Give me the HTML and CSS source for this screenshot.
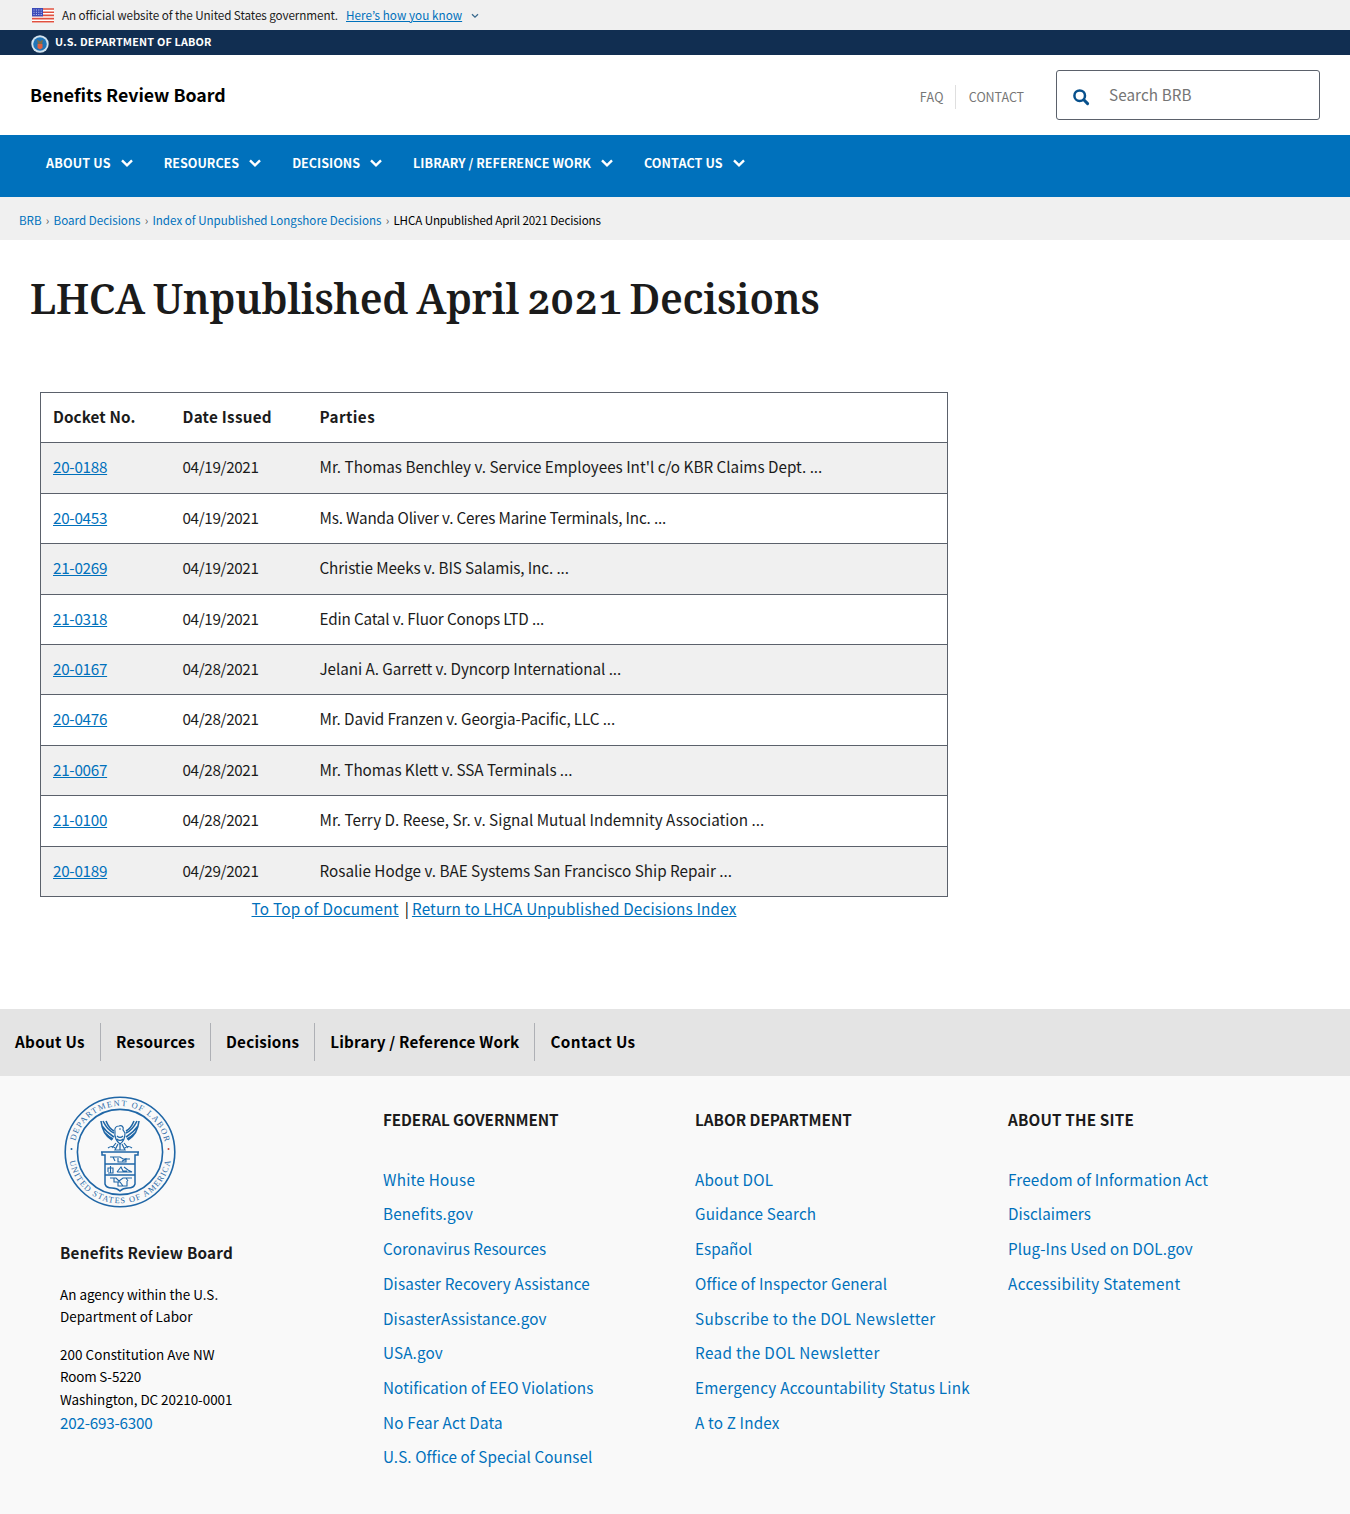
FILE: index.html
```html
<!DOCTYPE html>
<html lang="en">
<head>
<meta charset="utf-8">
<title>LHCA Unpublished April 2021 Decisions</title>
<link rel="stylesheet" href="styles.css">
</head>
<body>
<section class="gov-banner">
  <svg class="flag" viewBox="0 0 22 15"><rect width="22" height="15" fill="#fff"/><path d="M0 1h22M0 4.2h22M0 7.4h22M0 10.6h22M0 13.8h22" stroke="#e0503f" stroke-width="1.6"/><rect width="11" height="8.4" fill="#3c4bb8"/><path d="M1.5 2h9M1.5 4.3h9M1.5 6.5h9" stroke="#c5cbf2" stroke-dasharray="1 1.4"/></svg>
  <span class="gov-text">An official website of the United States government.</span>
  <a class="gov-link" href="#">Here’s how you know</a>
  <svg class="gov-chevron" viewBox="0 0 8 6"><path d="M1 1.2l3 3 3-3" fill="none" stroke="#3a6a8e" stroke-width="1.3"/></svg>
</section>
<div class="dept-bar">
  <svg class="dept-seal" viewBox="0 0 18 18"><circle cx="9" cy="9" r="8.7" fill="#d3e3ee"/><circle cx="9" cy="9" r="6.8" fill="#1f74b8"/><path d="M6 4.5l3 2 3-2-1 5H7z" fill="#7b6d4c"/><path d="M6.5 9h5v4L9 14.4 6.5 13z" fill="#e0603f"/></svg>
  <span>U.S. DEPARTMENT OF LABOR</span>
</div>
<header class="site-header">
  <a class="site-name" href="#">Benefits Review Board</a>
  <nav class="util-nav"><a href="#">FAQ</a><a href="#">CONTACT</a></nav>
  <form class="search"><svg viewBox="0 0 18 18"><circle cx="7.7" cy="7.7" r="5.3" fill="none" stroke="#07508c" stroke-width="2.5"/><path d="M11.8 11.8l3.8 3.8" stroke="#07508c" stroke-width="3" stroke-linecap="round"/></svg><span>Search BRB</span></form>
</header>
<nav class="main-nav">
  <a class="track-15" href="#"><span>ABOUT US</span><svg viewBox="0 0 12 8"><path d="M1 1.3l5 5 5-5"/></svg></a>
  <a href="#"><span>RESOURCES</span><svg viewBox="0 0 12 8"><path d="M1 1.3l5 5 5-5"/></svg></a>
  <a href="#"><span>DECISIONS</span><svg viewBox="0 0 12 8"><path d="M1 1.3l5 5 5-5"/></svg></a>
  <a class="track-5" href="#"><span>LIBRARY / REFERENCE WORK</span><svg viewBox="0 0 12 8"><path d="M1 1.3l5 5 5-5"/></svg></a>
  <a class="track-10" href="#"><span>CONTACT US</span><svg viewBox="0 0 12 8"><path d="M1 1.3l5 5 5-5"/></svg></a>
</nav>
<nav class="breadcrumb">
  <a href="#">BRB</a><i>›</i><a href="#">Board Decisions</a><i>›</i><a href="#">Index of Unpublished Longshore Decisions</a><i>›</i><span class="tight-10">LHCA Unpublished April 2021 Decisions</span>
</nav>
<main class="content">
  <h1>LHCA Unpublished April 2021 Decisions</h1>
  <table class="decisions">
    <thead><tr><th class="c-docket track-10">Docket No.</th><th class="c-date track-25">Date Issued</th><th class="track-40">Parties</th></tr></thead>
    <tbody>
      <tr><td><a href="#">20-0188</a></td><td>04/19/2021</td><td>Mr. Thomas Benchley v. Service Employees Int'l c/o KBR Claims Dept. ...</td></tr>
      <tr><td><a href="#">20-0453</a></td><td>04/19/2021</td><td class="tight-15">Ms. Wanda Oliver v. Ceres Marine Terminals, Inc. ...</td></tr>
      <tr><td><a href="#">21-0269</a></td><td>04/19/2021</td><td class="tight-10">Christie Meeks v. BIS Salamis, Inc. ...</td></tr>
      <tr><td><a href="#">21-0318</a></td><td>04/19/2021</td><td class="tight-15">Edin Catal v. Fluor Conops LTD ...</td></tr>
      <tr><td><a href="#">20-0167</a></td><td>04/28/2021</td><td class="tight-5">Jelani A. Garrett v. Dyncorp International ...</td></tr>
      <tr><td><a href="#">20-0476</a></td><td>04/28/2021</td><td class="tight-10">Mr. David Franzen v. Georgia-Pacific, LLC ...</td></tr>
      <tr><td><a href="#">21-0067</a></td><td>04/28/2021</td><td class="tight-5">Mr. Thomas Klett v. SSA Terminals ...</td></tr>
      <tr><td><a href="#">21-0100</a></td><td>04/28/2021</td><td>Mr. Terry D. Reese, Sr. v. Signal Mutual Indemnity Association ...</td></tr>
      <tr><td><a href="#">20-0189</a></td><td>04/29/2021</td><td>Rosalie Hodge v. BAE Systems San Francisco Ship Repair ...</td></tr>
    </tbody>
  </table>
  <p class="doc-links"><a class="track-25" href="#">To Top of Document</a><b>|</b><a class="track-20" href="#">Return to LHCA Unpublished Decisions Index</a></p>
</main>
<nav class="footer-nav"><a class="track-30" href="#">About Us</a><a class="track-30" href="#">Resources</a><a class="track-20" href="#">Decisions</a><a class="track-20" href="#">Library / Reference Work</a><a class="track-40" href="#">Contact Us</a></nav>
<footer class="site-footer">
  <div class="agency">
    <svg class="seal" viewBox="-56 -56 112 112">
      <defs><path id="ring-top" d="M-46 0a46 46 0 0 1 92 0"/><path id="ring-bottom" d="M-51.3 0a51.3 51.3 0 0 0 102.6 0"/></defs>
      <g class="seal-line"><circle r="54.8" stroke-width="1.6"/><circle r="42.6" stroke-width="1.6"/></g>
      <g class="seal-text">
        <text><textPath href="#ring-top" startOffset="11" textLength="123">DEPARTMENT OF LABOR</textPath></text>
        <text><textPath href="#ring-bottom" startOffset="9" textLength="143">UNITED STATES OF AMERICA</textPath></text>
      </g>
      <circle cx="-48.5" cy="-3" r="1" fill="#1f66a6"/><circle cx="48.5" cy="-3" r="1" fill="#c5473b"/>
      <!-- eagle -->
      <g class="seal-line" stroke-width="1.6">
        <path d="M-19-31c1 9 4 15 11 19M-17-31c3 6 6 10 11 12M-18-26c5 7 9 9 12 11M-16-20c4 4 7 6 9 7M-14-31c2 5 4 8 8 10"/>
        <path d="M19-31c-1 9-4 15-11 19M17-31c-3 6-6 10-11 12M18-26c-5 7-9 9-12 11M16-20c-4 4-7 6-9 7M14-31c-2 5-4 8-8 10"/>
      </g>
      <g class="seal-line" stroke-width="1.2">
        <path d="M-5-20c-1-4 1-6 4-6 3-1 5 1 4 4l2 3c0 5-2 9-5 11-3-2-6-7-5-12zM-3-16c2 2 4 2 6 0M-3-13c2 2 4 2 6 0M-1-23h2"/>
        <path d="M-4-9l-4 5M4-9l4 5M-2-8l-3 6h10l-3-6M0-8v6M-12-4q4-3 7 0M12-4q-4-3-7 0"/>
      </g>
      <!-- shield -->
      <g class="seal-line" stroke-width="1.5"><path d="M-19 0h38M-18 0v3h3v29q1 4 7 4 5 0 8 3 3-3 8-3 6 0 7-4V3h3V0M-15 12h30M-15 23h30"/></g>
      <g class="seal-line" stroke-width="1.1"><path d="M-10 5h10l3 2h7M-7 5l2 4M-2 6v4h8V6M2 9l5-2M-12 20v-4h5v5h-5M-9.500 14v7M-3 20l4-5 2 4h4M4 15l4 3 4 2H-3M-10 26h6l3 3 4-3h9M-6 26v4h6l3 4h4v-5M-2 30v4h5M6 26l2 3"/></g>
    </svg>
    <h2>Benefits Review Board</h2>
    <p class="addr">An agency within the U.S.<br><span class="track-10">Department of Labor</span></p>
    <p class="addr"><span class="track-5">200 Constitution Ave NW</span><br><span class="tight-15">Room S-5220</span><br><span class="tight-5">Washington, DC 20210-0001</span></p>
    <a class="phone" href="#">202-693-6300</a>
  </div>
  <div class="links"><h3 class="tight-10">FEDERAL GOVERNMENT</h3><a class="track-25" href="#">White House</a><a class="track-20" href="#">Benefits.gov</a><a class="track-5" href="#">Coronavirus Resources</a><a href="#">Disaster Recovery Assistance</a><a href="#">DisasterAssistance.gov</a><a href="#">USA.gov</a><a class="track-10" href="#">Notification of EEO Violations</a><a class="track-20" href="#">No Fear Act Data</a><a class="track-10" href="#">U.S. Office of Special Counsel</a></div>
  <div class="links"><h3>LABOR DEPARTMENT</h3><a class="track-20" href="#">About DOL</a><a href="#">Guidance Search</a><a class="track-5" href="#">Español</a><a class="track-15" href="#">Office of Inspector General</a><a class="track-35" href="#">Subscribe to the DOL Newsletter</a><a class="track-35" href="#">Read the DOL Newsletter</a><a class="track-25" href="#">Emergency Accountability Status Link</a><a class="track-15" href="#">A to Z Index</a></div>
  <div class="links"><h3 class="track-15">ABOUT THE SITE</h3><a class="track-20" href="#">Freedom of Information Act</a><a class="track-5" href="#">Disclaimers</a><a class="track-10" href="#">Plug-Ins Used on DOL.gov</a><a class="track-35" href="#">Accessibility Statement</a></div>
</footer>
</body>
</html>
```
FILE: styles.css
```css
* { box-sizing: border-box; }
body { margin: 0; background: #fff; color: #1b1b1b; font-family: "Noto Sans CJK KR", sans-serif; font-size: 15.25px; }
a { color: #0071bc; text-decoration: none; }
h1, h2, h3, p { margin: 0; }
svg { display: block; flex: none; }

.gov-banner { display: flex; align-items: center; height: 30px; padding-left: 32px; background: #f0f0f0; font-size: 11.7px; letter-spacing: -0.09px; line-height: 20px; }
.flag { width: 22px; height: 15px; margin-right: 8px; }
.gov-link { margin-left: 8px; letter-spacing: 0.04px; text-decoration: underline; }
.gov-chevron { width: 8px; height: 6px; margin: 2px 0 0 9px; }

.dept-bar { display: flex; height: 25px; padding-left: 31px; background: #112e51; color: #fff; font-size: 10.8px; font-weight: 700; letter-spacing: 0.19px; line-height: 23px; }
.dept-seal { width: 18px; height: 18px; margin: 5px 6px 0 0; }

.site-header { display: flex; align-items: center; height: 80px; padding: 0 30px; }
.site-name { margin-bottom: 2px; color: #000; font-size: 17.75px; font-weight: 700; line-height: 26px; }
.util-nav { display: flex; margin: 4px 32px 0 auto; }
.util-nav a { color: #767676; font-size: 12.5px; letter-spacing: -0.05px; line-height: 24px; }
.util-nav a:first-child { padding-right: 11px; margin-right: 13px; border-right: 1px solid #dfdfdf; letter-spacing: 0.3px; }
.search { display: flex; align-items: center; width: 264px; height: 50px; padding-left: 15px; border: 1px solid #5b616b; border-radius: 3px; color: #757575; line-height: 26px; }
.search svg { width: 18px; height: 18px; margin: 3px 19px 0 0; }
.search span { margin-bottom: 2px; letter-spacing: 0.08px; }

.main-nav { display: flex; height: 62px; padding: 18px 0 0 46px; background: #0071bc; }
.main-nav a { display: flex; height: 20px; margin-right: 31px; color: #fff; font-size: 12.55px; font-weight: 700; line-height: 19px; }
.main-nav svg { width: 12px; height: 8px; margin: 6px 0 0 10px; fill: none; stroke: #fff; stroke-width: 2.4; }

.breadcrumb { display: flex; height: 43px; padding: 13px 0 0 19px; background: #f0f0f0; color: #000; font-size: 11.6px; line-height: 20px; }
.breadcrumb i { width: 12px; color: #555; font-style: normal; text-align: center; }

.content { height: 769px; padding: 30px; }
h1 { height: 60px; font-family: "Noto Serif", "DejaVu Serif Condensed", serif; font-size: 41px; font-variant-numeric: oldstyle-nums; font-weight: 620; letter-spacing: -0.33px; word-spacing: -2.3px; line-height: 57px; white-space: nowrap; }
.decisions { width: 908px; margin: 62px 0 0 10px; border: 1px solid #5b616b; border-collapse: collapse; table-layout: fixed; }
th, td { padding: 11px 12px 13px; border-bottom: 1px solid #5b616b; line-height: 25.4px; text-align: left; }
.c-docket { width: 130px; }
.c-date { width: 137px; }
tbody tr:nth-child(odd) { background: #f0f0f0; }
.decisions a { letter-spacing: -0.28px; }
.decisions td:nth-child(2) { letter-spacing: -0.36px; }
.decisions a, .doc-links a { text-decoration: underline; }
.doc-links { display: flex; justify-content: center; width: 908px; margin: -1px 0 0 10px; line-height: 25px; }
.doc-links b { margin: 0 3px 0 6px; color: #000; font-weight: 400; }

.footer-nav { display: flex; height: 67px; padding: 14px 0; background: #e4e4e4; }
.footer-nav a { height: 38px; padding: 0 15px; color: #000; font-weight: 700; line-height: 37px; }
.footer-nav a + a { border-left: 1px solid #aeb0b5; }

.site-footer { display: grid; grid-template-columns: 323px 312px 313px 1fr; height: 438px; padding: 20px 0 0 60px; background: #f9f9f9; }
.seal { width: 112px; height: 112px; margin-left: 4px; }
.seal-line { fill: none; stroke: #1f66a6; }
.seal-text { fill: #2d6ca8; font-family: "Liberation Serif", serif; font-size: 8.4px; }
.agency h2 { margin: 30px 0 17px; font-size: 15.25px; letter-spacing: 0.23px; line-height: 28px; }
.addr { margin-bottom: 15px; color: #000; font-size: 13.45px; line-height: 22.4px; }
.phone { display: block; margin-top: -15.5px; letter-spacing: -0.22px; line-height: 25px; }
.links h3 { margin: 9px 0 28.7px; font-size: 15.25px; line-height: 28px; }
.links a { display: block; letter-spacing: 0.13px; line-height: 34.7px; }

/* Optical tracking */
.tight-15 { letter-spacing: -0.16px; }
.tight-10 { letter-spacing: -0.11px; }
.tight-5 { letter-spacing: -0.05px; }
.track-5, .links .track-5 { letter-spacing: 0.05px; }
.track-10, .links .track-10 { letter-spacing: 0.09px; }
.track-15, .links .track-15 { letter-spacing: 0.16px; }
.track-20, .links .track-20 { letter-spacing: 0.19px; }
.track-25, .links .track-25 { letter-spacing: 0.25px; }
.track-30 { letter-spacing: 0.3px; }
.links .track-35 { letter-spacing: 0.36px; }
.track-40 { letter-spacing: 0.42px; }
```
